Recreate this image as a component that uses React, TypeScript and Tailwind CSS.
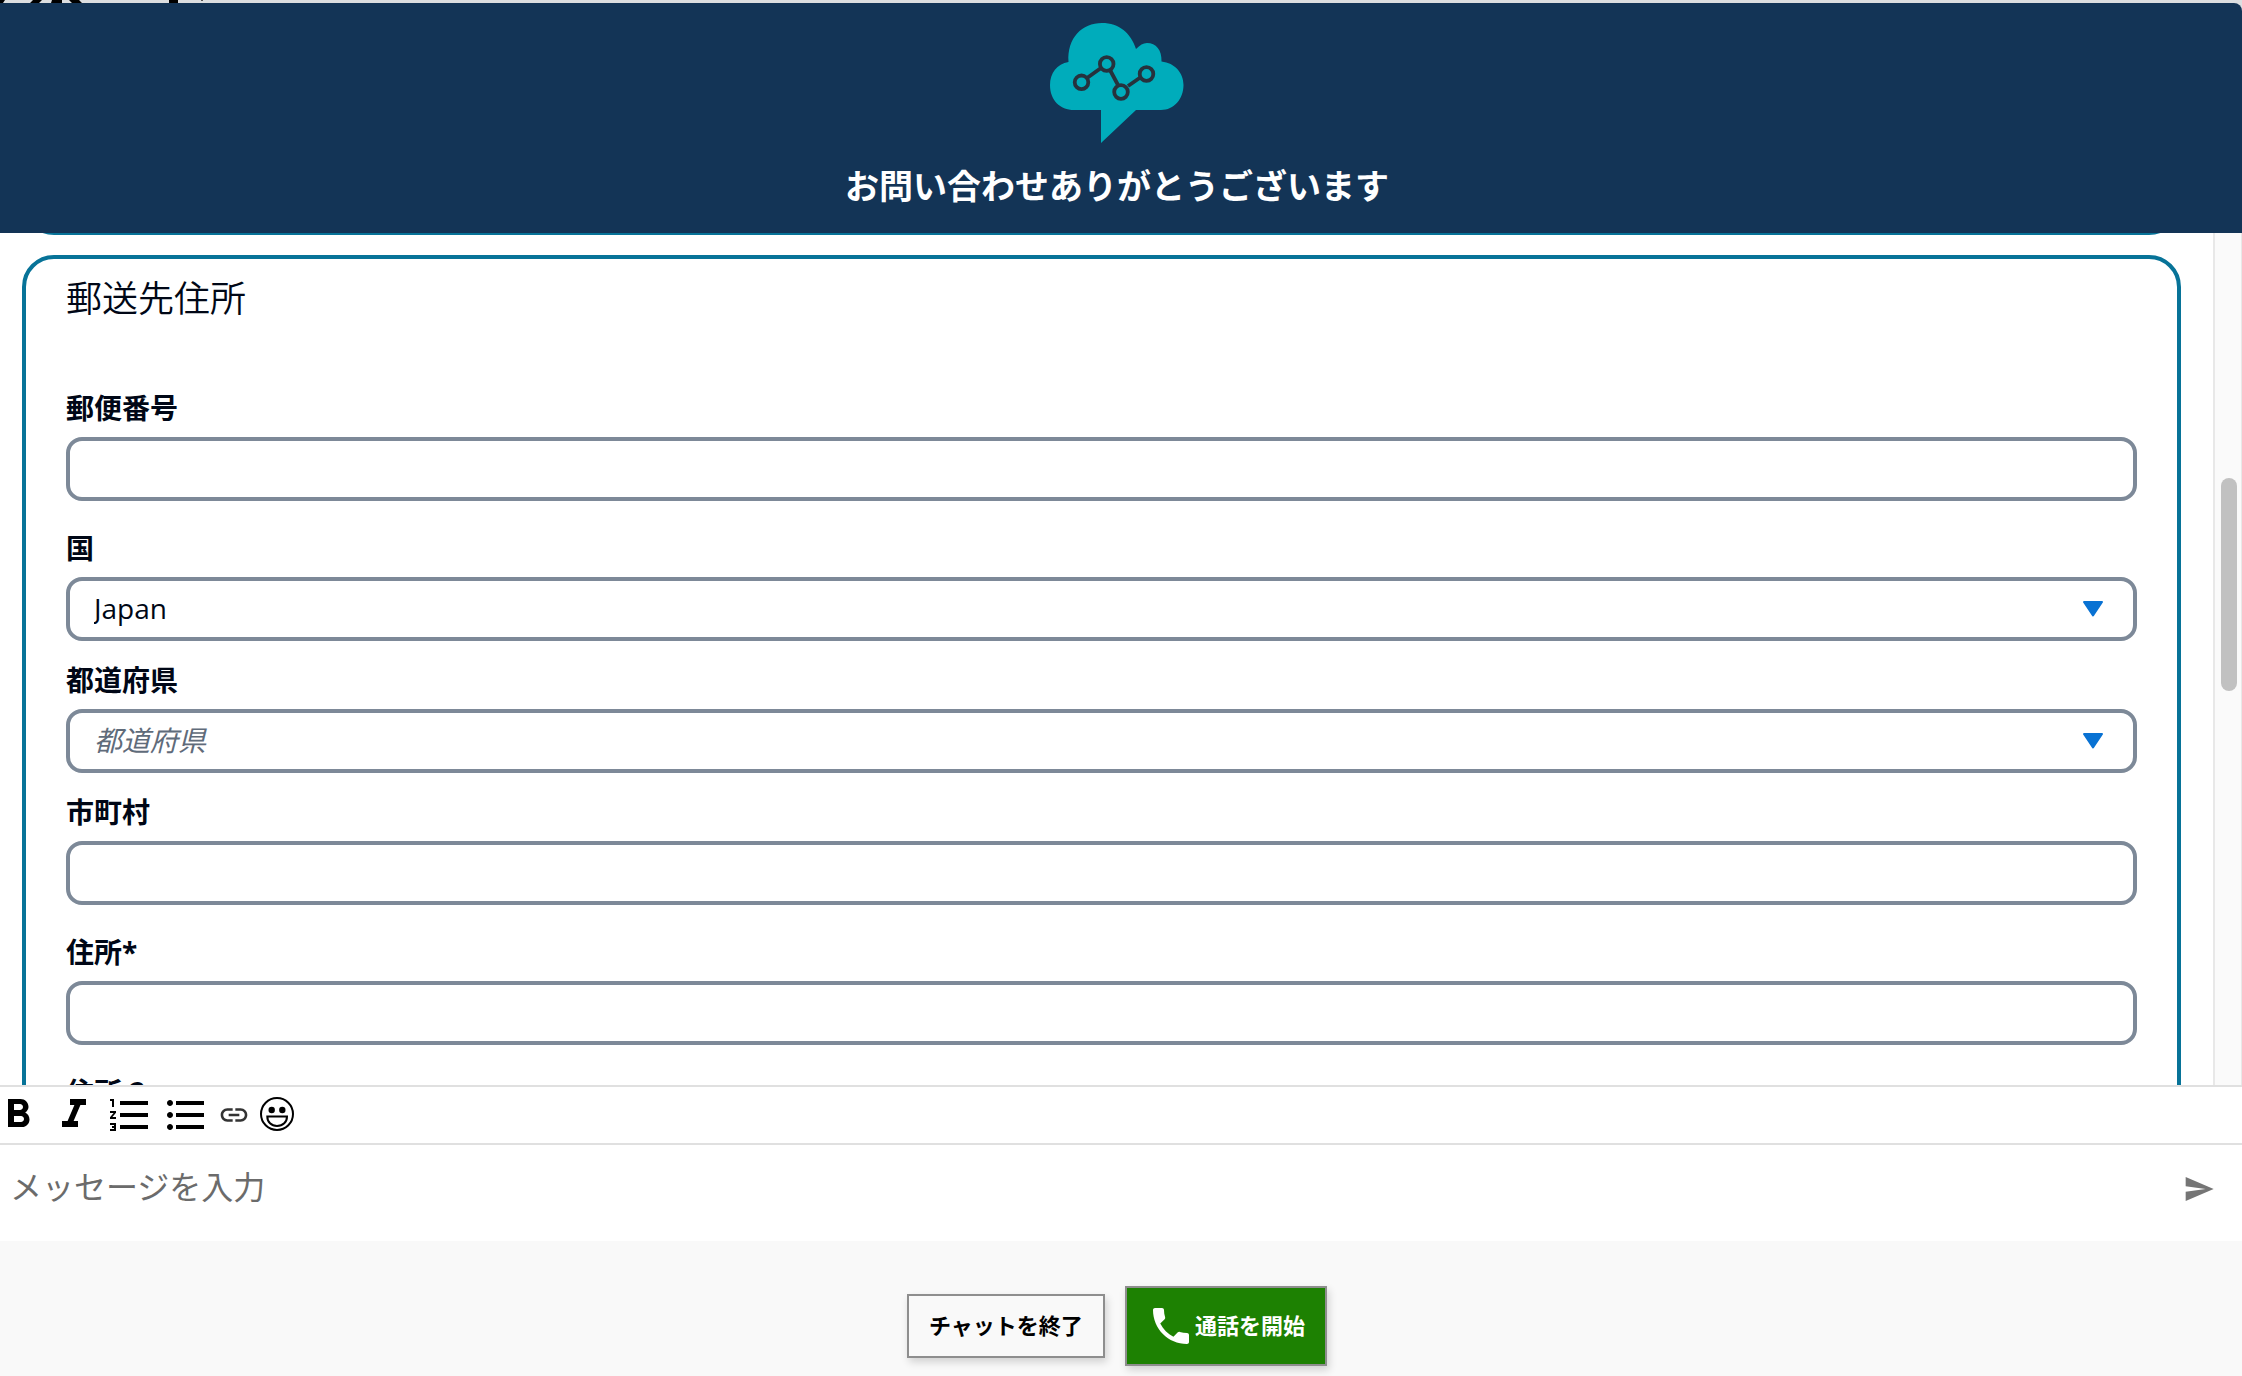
import React, { useState } from "react";
import {
  MdFormatBold,
  MdFormatItalic,
  MdFormatListNumbered,
  MdFormatListBulleted,
  MdLink,
  MdSend,
  MdPhone,
} from "react-icons/md";

const fields = [
  { id: "zip", label: "郵便番号", type: "text" },
  { id: "country", label: "国", type: "select", options: ["Japan"] },
  { id: "prefecture", label: "都道府県", type: "select", placeholder: "都道府県" },
  { id: "city", label: "市町村", type: "text" },
  { id: "address1", label: "住所*", type: "text" },
  { id: "address2", label: "住所 2", type: "text" },
];

function Logo() {
  return (
    <svg width="134" height="120" viewBox="0 0 134 120" aria-hidden="true">
      <path
        fill="#00acbb"
        d="M18.500 39C17 15 32 0 52 0C69 0 81 10 86 26C90 22 93 20 97 20C106 20 112 27 111.500 38.500C125 40 133.500 50 133.500 62C133.500 76 124 87 111 87H86L51 120V87H24C10 87 0 77 0 62C0 50 7 41 18.500 39Z"
      />
      <g fill="none" stroke="#26323d" strokeWidth="3.800">
        <path d="M37 55L51 45M60 47L68 62M78 63L91 54" />
        <circle cx="31.500" cy="59.300" r="6.800" />
        <circle cx="56.700" cy="41" r="6.800" />
        <circle cx="71" cy="69" r="6.800" />
        <circle cx="96.500" cy="51" r="6.800" />
      </g>
    </svg>
  );
}

function EmojiIcon() {
  return (
    <svg width="36" height="36" viewBox="-1 1 36 36" aria-hidden="true">
      <circle cx="18" cy="18" r="16" fill="none" stroke="#000" strokeWidth="2" />
      <circle cx="12.700" cy="14" r="3.200" />
      <circle cx="23.300" cy="14" r="3.200" />
      <path d="M8.300 20.500H28C28 26 24 30 18 30C12.300 30 8.300 26 8.300 20.500Z" fill="none" stroke="#000" strokeWidth="2" />
    </svg>
  );
}

function Field({ item }: { item: any }) {
  const [value, setValue] = useState(item.options ? item.options[0] : "");
  const box = "block w-full h-16 border-4 border-[#7d8998] rounded-2xl px-6 pb-0.5 bg-white text-[28px] outline-none";

  return (
    <div className={item.type === "select" ? "mb-5" : "mb-7"}>
      <label htmlFor={item.id} className="block mb-2.5 text-[28px] leading-[38px] font-bold">
        {item.label}
      </label>
      {item.type === "select" ? (
        <div className="relative">
          <select
            id={item.id}
            value={value}
            onChange={(e) => setValue(e.target.value)}
            className={`${box} appearance-none ${value ? "" : "italic text-[#5f6b7a]"}`}
          >
            {item.placeholder && <option value="">{item.placeholder}</option>}
            {item.options?.map((opt: string) => (
              <option key={opt}>{opt}</option>
            ))}
          </select>
          <svg
            className="absolute right-8 top-6 pointer-events-none"
            width="24"
            height="16"
            viewBox="0 0 24 16"
            aria-hidden="true"
          >
            <path d="M3 1H21L12 14.500Z" fill="#0972d3" stroke="#0972d3" strokeWidth="2" strokeLinejoin="round" />
          </svg>
        </div>
      ) : (
        <input id={item.id} type="text" value={value} onChange={(e) => setValue(e.target.value)} className={box} />
      )}
    </div>
  );
}

export default function App() {
  const [message, setMessage] = useState("");

  return (
    <div className="flex flex-col h-screen overflow-hidden bg-white text-[#000716] font-['Open_Sans','Noto_Sans_CJK_JP',sans-serif]">
      <div className="bg-[#dcdee0] shrink-0">
        <svg className="block" width="220" height="3" viewBox="0 0 220 3" aria-hidden="true">
          <path d="M0 0H5L3 3H0ZM33 0H42L39 3H30ZM52 0H62V3H51ZM69 0H79L82 3H72ZM169 0H178V3H169Z" />
          <path d="M201 0H203V1H201Z" fill="#555" />
        </svg>
        <header className="h-[230px] bg-[#133456] rounded-tr-lg pr-2 pt-5 flex flex-col items-center">
          <Logo />
          <h1 className="mt-5 text-[34px] leading-[46px] font-bold text-white">お問い合わせありがとうございます</h1>
        </header>
      </div>

      <div className="flex flex-1 min-h-0">
        <main className="flex-1 overflow-hidden px-8 pl-[22px]">
          {/* bottom of the previous card */}
          <div className="h-16 -mt-[62px] border-4 border-[#077398] rounded-[32px]" />
          <section className="mt-5 border-4 border-[#077398] rounded-[32px] px-10 pt-3.5 pb-10">
            <h2 className="text-[36px] leading-[52px] font-[350] mb-16">郵送先住所</h2>
            {fields.map((item) => (
              <Field key={item.id} item={item} />
            ))}
          </section>
        </main>
        <div className="w-[29px] shrink-0 bg-[#fafafa] border-l-2 border-r border-[#e8e8e8] flex justify-center pl-0.5 pt-[245px]">
          <div className="w-4 h-[213px] rounded-full bg-[#c1c1c1]" />
        </div>
      </div>

      <div className="shrink-0 h-[60px] border-y-2 border-[#e0e0e0] text-black overflow-hidden">
        <div className="-ml-1.5 h-14 flex items-center gap-2">
          <button aria-label="Bold"><MdFormatBold size={48} /></button>
          <button aria-label="Italic"><MdFormatItalic size={48} /></button>
          <button aria-label="Numbered list"><MdFormatListNumbered size={48} /></button>
          <button aria-label="Bulleted list"><MdFormatListBulleted size={48} /></button>
          <button aria-label="Link" className="text-[#333]"><MdLink size={32} /></button>
          <button aria-label="Emoji"><EmojiIcon /></button>
        </div>
      </div>

      <div className="shrink-0 h-24 pl-2.5 pr-[27px] pt-5 flex items-start">
        <textarea
          aria-label="メッセージ"
          placeholder="メッセージを入力"
          value={message}
          onChange={(e) => setMessage(e.target.value)}
          className="flex-1 h-12 text-[32px] leading-11 resize-none outline-none placeholder:text-[#6b6b6b]"
        />
        <button aria-label="Send" className="h-12 text-[#757575]"><MdSend size={32} /></button>
      </div>

      <footer className="shrink-0 h-[135px] bg-[#f9f9f9] pr-2 pb-[10px] pt-[45px] flex items-center justify-center gap-5 text-[22px] font-bold">
        <button className="h-16 px-5 pb-0.5 border-2 border-[#8e8e8e] text-black shadow-[2px_4px_8px_rgba(0,0,0,0.16)]">
          チャットを終了
        </button>
        <button className="h-20 px-5 border-2 border-[#8e8e8e] bg-[#1d8102] text-white flex items-center shadow-[2px_4px_8px_rgba(0,0,0,0.16)]">
          <MdPhone size={48} />
          <span className="pb-0.5">通話を開始</span>
        </button>
      </footer>
    </div>
  );
}
